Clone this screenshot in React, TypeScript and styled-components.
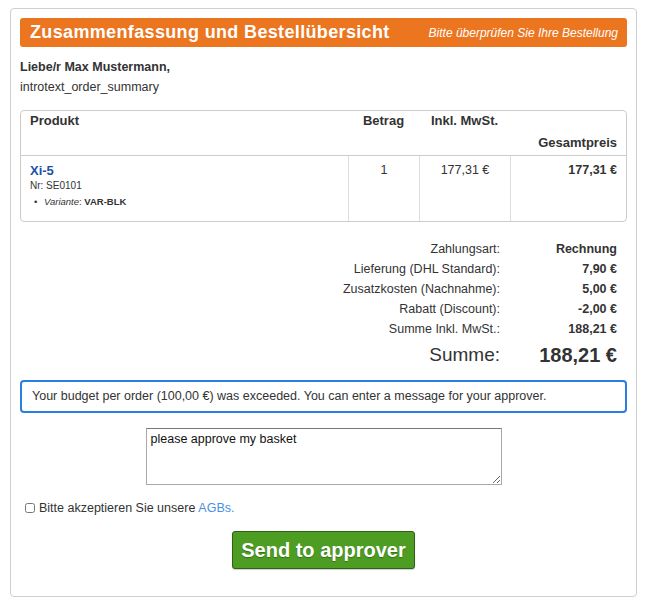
import React from "react";
import styled, { createGlobalStyle } from "styled-components";

const GlobalStyle = createGlobalStyle`
  html, body { margin: 0; padding: 0; background: #fff; }
  body { font-family: "Liberation Sans", Arial, Helvetica, sans-serif; color: #333; }
`;

const Page = styled.div`
  padding: 8px 0 0 10px;
`;

const Panel = styled.div`
  width: 627px;
  box-sizing: border-box;
  border: 1px solid #cfcfcf;
  border-radius: 4px;
  padding: 9px 9px 27px 9px;
  display: flex;
  flex-direction: column;
`;

const Header = styled.div`
  height: 29px;
  background: #ec7520;
  border-radius: 3px;
  display: flex;
  align-items: center;
  justify-content: space-between;
  padding: 0 9px 0 10px;
  color: #fff;
`;

const Title = styled.h1`
  margin: 0;
  font-size: 18px;
  font-weight: bold;
  letter-spacing: 0.35px;
  line-height: 29px;
`;

const Subtitle = styled.span`
  font-size: 12px;
  font-style: italic;
`;

const Greeting = styled.div<{ $bold?: boolean; $first?: boolean }>`
  margin-top: ${(p) => (p.$first ? "10px" : "0")};
  font-size: 12.5px;
  line-height: 20px;
  font-weight: ${(p) => (p.$bold ? "bold" : "normal")};
`;

const Table = styled.div`
  margin-top: 13px;
  border: 1px solid #cccccc;
  border-radius: 4px;
  display: grid;
  grid-template-columns: 327px 71px 91px 116px;
`;

const HeadCell = styled.div<{ $align: "left" | "center" | "right"; $bottom?: boolean }>`
  height: 45px;
  box-sizing: border-box;
  border-bottom: 1px solid #cccccc;
  font-size: 13px;
  font-weight: bold;
  line-height: 16px;
  padding: ${(p) => (p.$bottom ? "0 9px 4px 9px" : "2px 9px 0 9px")};
  text-align: ${(p) => p.$align};
  display: flex;
  flex-direction: column;
  justify-content: ${(p) => (p.$bottom ? "flex-end" : "flex-start")};
`;

const BodyCell = styled.div<{ $align: "left" | "center" | "right"; $first?: boolean; $bold?: boolean }>`
  height: 65px;
  box-sizing: border-box;
  border-left: ${(p) => (p.$first ? "none" : "1px solid #dddddd")};
  padding: ${(p) => (p.$first ? "7px 9px 0 9px" : "6px 9px 0 9px")};
  text-align: ${(p) => p.$align};
  font-size: 12.5px;
  line-height: 16px;
  font-weight: ${(p) => (p.$bold ? "bold" : "normal")};
`;

const ProductLink = styled.a`
  display: block;
  color: #1d51a2;
  font-size: 13px;
  font-weight: bold;
  line-height: 16px;
  text-decoration: none;
`;

const ProductNr = styled.div`
  font-size: 10px;
  line-height: 14px;
`;

const AttrList = styled.ul`
  list-style: none;
  margin: 2px 0 0 0;
  padding: 0;
`;

const AttrItem = styled.li`
  font-size: 9.5px;
  line-height: 14px;
  padding-left: 14px;
  position: relative;
  &::before {
    content: "•";
    position: absolute;
    left: 4px;
    top: 0;
  }
  em { font-style: italic; }
  b { font-weight: bold; }
`;

const Summary = styled.div`
  margin-top: 17px;
  display: grid;
  grid-template-columns: 1fr 117px;
`;

const SumLabel = styled.div<{ $big?: boolean }>`
  text-align: right;
  padding-right: 10px;
  font-size: ${(p) => (p.$big ? "19px" : "12.5px")};
  line-height: ${(p) => (p.$big ? "32px" : "20px")};
`;

const SumValue = styled.div<{ $big?: boolean }>`
  text-align: right;
  padding-right: 10px;
  font-weight: bold;
  font-size: ${(p) => (p.$big ? "20px" : "12.5px")};
  line-height: ${(p) => (p.$big ? "32px" : "20px")};
`;

const Alert = styled.div`
  margin-top: 9px;
  border: 2px solid #2b7de1;
  border-radius: 4px;
  padding: 6px 10px;
  font-size: 12.5px;
  line-height: 17px;
`;

const Message = styled.textarea`
  align-self: center;
  margin-top: 15px;
  width: 356px;
  height: 57px;
  box-sizing: border-box;
  border: 1px solid #a9a9a9;
  border-top-color: #777;
  border-radius: 0;
  padding: 3px 4px;
  font-family: "Liberation Sans", Arial, sans-serif;
  font-size: 12.5px;
  line-height: 14px;
  color: #111;
  resize: both;
`;

const AgbRow = styled.label`
  margin-top: 13px;
  display: flex;
  align-items: center;
  font-size: 12.5px;
  line-height: 20px;
  a { color: #4a90e2; text-decoration: none; margin-left: 3px; }
`;

const Check = styled.input`
  width: 10px;
  height: 10px;
  margin: 0 4px 0 5px;
`;

const SendButton = styled.button`
  align-self: center;
  margin-top: 13px;
  width: 183px;
  height: 38px;
  background: #4c9d22;
  border: 1px solid #2f5f18;
  border-radius: 3px;
  color: #fff;
  font-family: "Liberation Sans", Arial, sans-serif;
  font-size: 20px;
  font-weight: bold;
  text-shadow: 0 1px 1px rgba(0, 0, 0, 0.3);
  box-shadow: 0 1px 1px rgba(0, 0, 0, 0.2);
  cursor: pointer;
`;

const summaryRows = [
  ["Zahlungsart:", "Rechnung"],
  ["Lieferung (DHL Standard):", "7,90 €"],
  ["Zusatzkosten (Nachnahme):", "5,00 €"],
  ["Rabatt (Discount):", "-2,00 €"],
  ["Summe Inkl. MwSt.:", "188,21 €"],
];

export default function App() {
  return (
    <>
      <GlobalStyle />
      <Page>
        <Panel>
          <Header>
            <Title>Zusammenfassung und Bestellübersicht</Title>
            <Subtitle>Bitte überprüfen Sie Ihre Bestellung</Subtitle>
          </Header>
          <Greeting $bold $first>Liebe/r Max Mustermann,</Greeting>
          <Greeting>introtext_order_summary</Greeting>

          <Table>
            <HeadCell $align="left">Produkt</HeadCell>
            <HeadCell $align="center">Betrag</HeadCell>
            <HeadCell $align="center">Inkl. MwSt.</HeadCell>
            <HeadCell $align="right" $bottom>Gesamtpreis</HeadCell>

            <BodyCell $align="left" $first>
              <ProductLink href="#">Xi-5</ProductLink>
              <ProductNr>Nr: SE0101</ProductNr>
              <AttrList>
                <AttrItem>
                  <em>Variante</em>: <b>VAR-BLK</b>
                </AttrItem>
              </AttrList>
            </BodyCell>
            <BodyCell $align="center">1</BodyCell>
            <BodyCell $align="center">177,31 €</BodyCell>
            <BodyCell $align="right" $bold>177,31 €</BodyCell>
          </Table>

          <Summary>
            {summaryRows.map(([label, value]) => (
              <React.Fragment key={label}>
                <SumLabel>{label}</SumLabel>
                <SumValue>{value}</SumValue>
              </React.Fragment>
            ))}
            <SumLabel $big>Summe:</SumLabel>
            <SumValue $big>188,21 €</SumValue>
          </Summary>

          <Alert>
            Your budget per order (100,00 €) was exceeded. You can enter a message for your approver.
          </Alert>

          <Message defaultValue="please approve my basket" />

          <AgbRow>
            <Check type="checkbox" />
            Bitte akzeptieren Sie unsere <a href="#">AGBs.</a>
          </AgbRow>

          <SendButton type="button">Send to approver</SendButton>
        </Panel>
      </Page>
    </>
  );
}
